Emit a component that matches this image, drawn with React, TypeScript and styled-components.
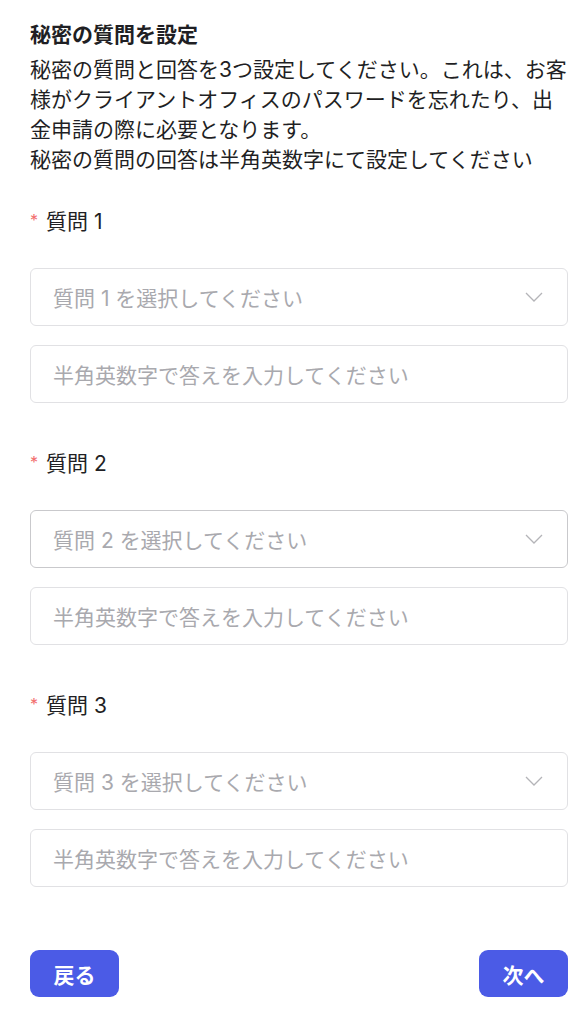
import React from "react";
import styled, { createGlobalStyle } from "styled-components";

const GlobalStyle = createGlobalStyle`
  * { box-sizing: border-box; }
  body {
    margin: 0;
    background: #ffffff;
    font-family: Inter, "Noto Sans CJK JP", sans-serif;
    color: #1f1f24;
  }
`;

const Page = styled.div`
  padding: 20px 10px 18px 30px;
  width: 578px;
`;

const Title = styled.h2`
  margin: 0;
  font-size: 21px;
  line-height: 30px;
  font-weight: 700;
`;

const Intro = styled.p`
  margin: 5px 0 0;
  font-size: 21px;
  line-height: 30px;
  font-weight: 400;
`;

const Section = styled.div`
  margin-top: 32px;
  display: flex;
  flex-direction: column;
  & + & {
    margin-top: 46px;
  }
`;

const Label = styled.div`
  display: flex;
  align-items: center;
  font-size: 21px;
  line-height: 30px;
  margin-bottom: 31px;
`;

const Star = styled.span`
  color: #f26d6d;
  font-size: 16px;
  margin-right: 8px;
  position: relative;
  top: -2px;
`;

const Field = styled.div<{ $active?: boolean }>`
  height: 58px;
  border: 1px solid ${(p) => (p.$active ? "#c9c9cc" : "#e1e1e4")};
  border-radius: 6px;
  display: flex;
  align-items: center;
  justify-content: space-between;
  padding: 0 24px 0 22px;
  font-size: 21px;
  color: #a9a9ae;
  & + & {
    margin-top: 19px;
  }
`;

const Footer = styled.div`
  display: flex;
  justify-content: space-between;
  margin-top: 63px;
`;

const Button = styled.button`
  height: 47px;
  border: none;
  border-radius: 9px;
  background: #4b5be6;
  color: #ffffff;
  font-family: inherit;
  font-size: 21px;
  font-weight: 700;
  padding: 0;
  width: 89px;
`;

const Chevron = () => (
  <svg width="18" height="10" viewBox="0 0 18 10" fill="none">
    <path d="M1 1l8 8 8-8" stroke="#b4b4b8" strokeWidth="1.3" />
  </svg>
);

const questions = [1, 2, 3];

export default function App() {
  return (
    <Page>
      <GlobalStyle />
      <Title>秘密の質問を設定</Title>
      <Intro>
        秘密の質問と回答を3つ設定してください。これは、お客様がクライアントオフィスのパスワードを忘れたり、出金申請の際に必要となります。
        <br />
        秘密の質問の回答は半角英数字にて設定してください
      </Intro>
      {questions.map((n) => (
        <Section key={n}>
          <Label>
            <Star>*</Star>質問 {n}
          </Label>
          <Field $active={n === 2}>
            <span>質問 {n} を選択してください</span>
            <Chevron />
          </Field>
          <Field>
            <span>半角英数字で答えを入力してください</span>
          </Field>
        </Section>
      ))}
      <Footer>
        <Button>戻る</Button>
        <Button>次へ</Button>
      </Footer>
    </Page>
  );
}
